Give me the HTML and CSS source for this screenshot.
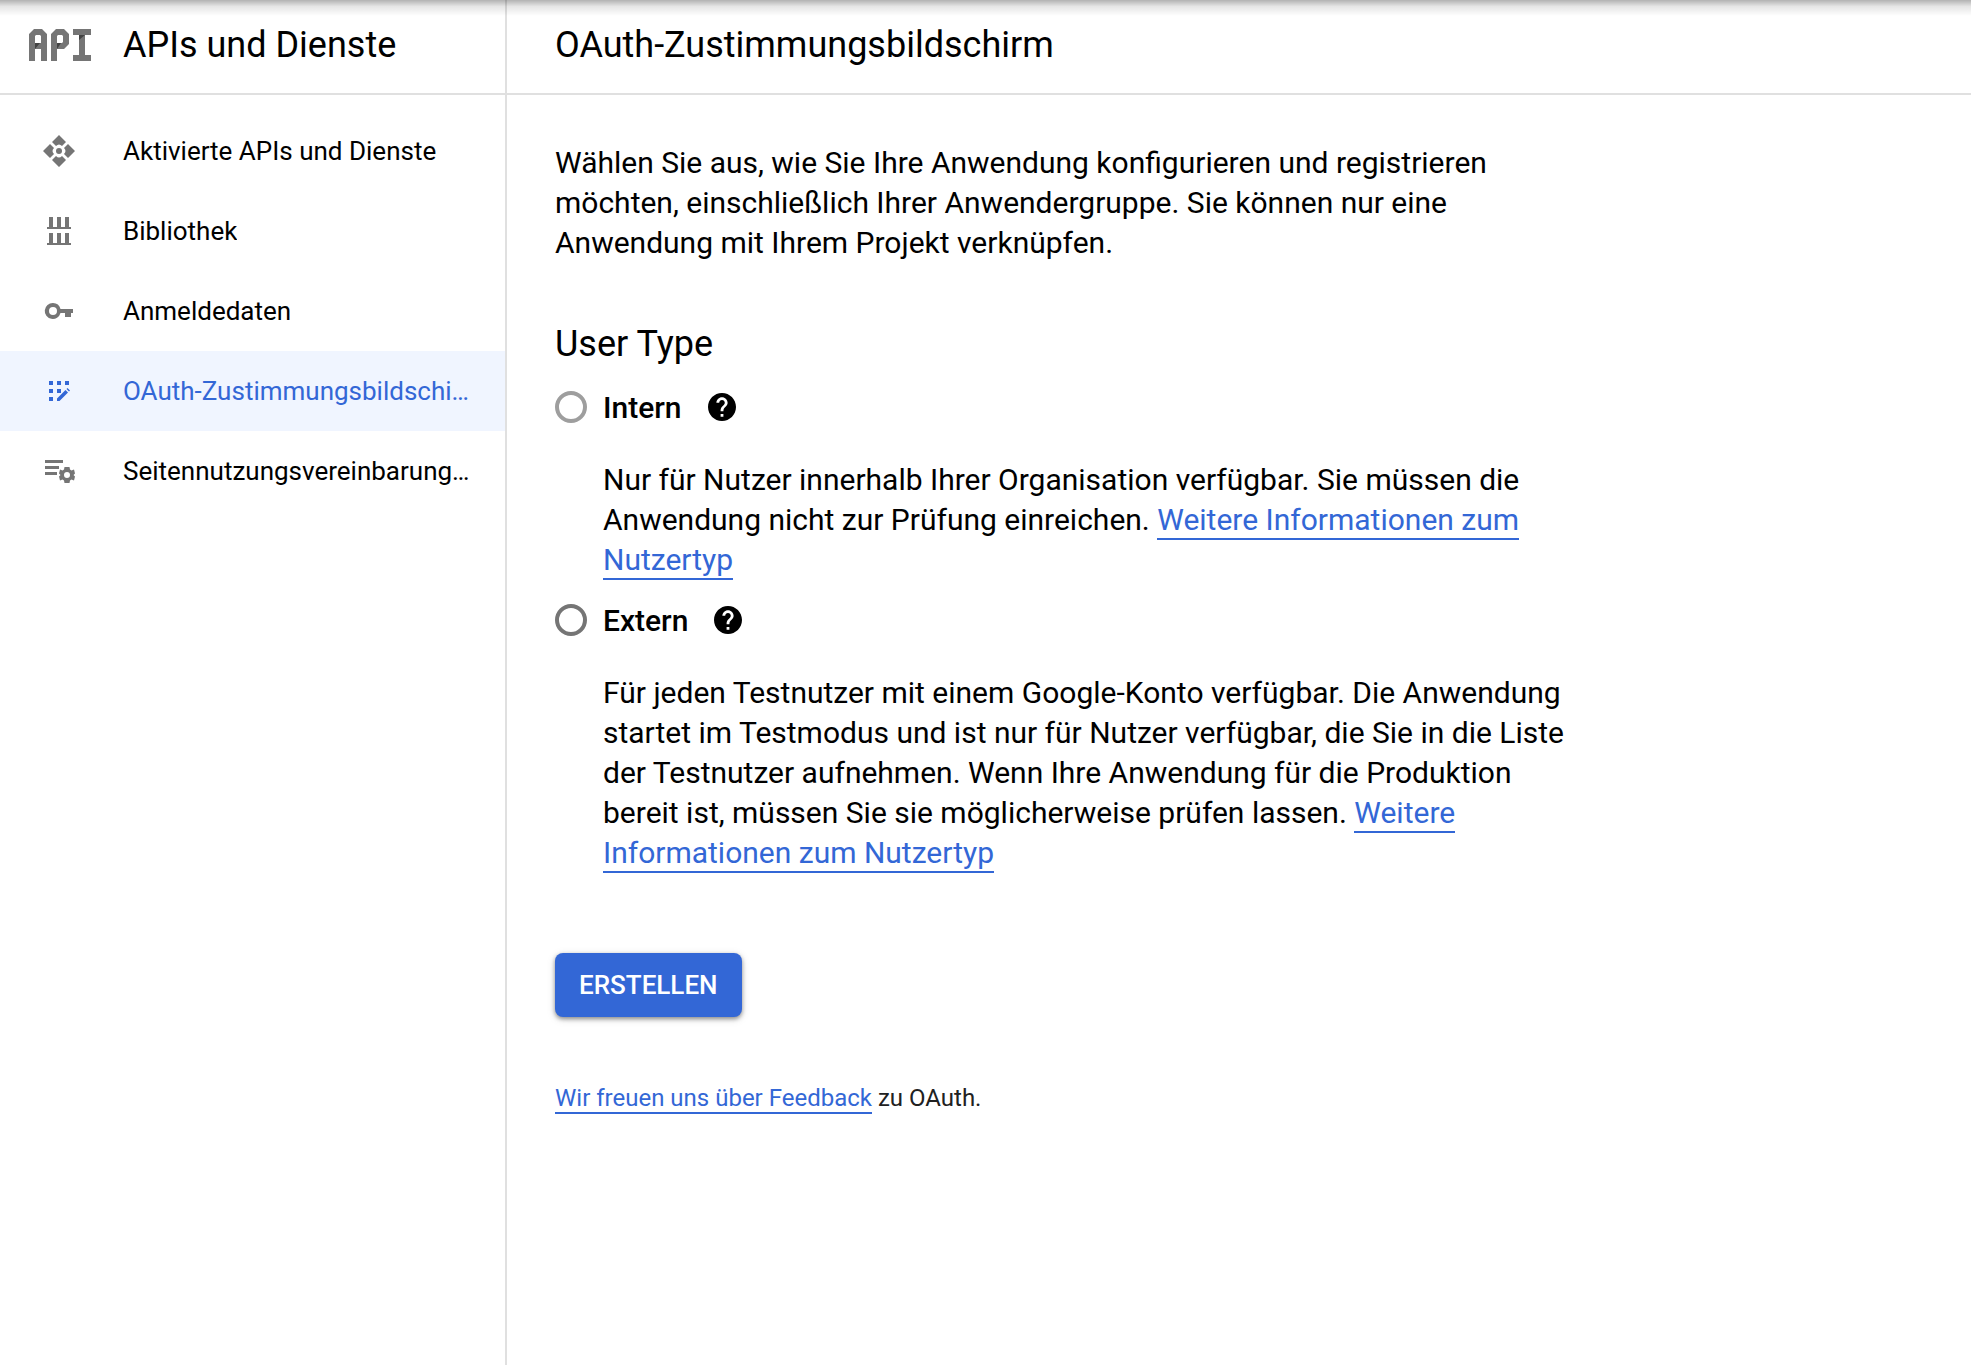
FILE: index.html
```html
<!DOCTYPE html>
<html lang="de">
<head>
<meta charset="utf-8">
<meta name="viewport" content="width=device-width, initial-scale=1">
<title>OAuth-Zustimmungsbildschirm</title>
<link rel="stylesheet" href="styles.css">
</head>
<body>
<div class="app">
  <aside class="sidebar">
    <div class="bar product">
      <svg class="product-logo" viewBox="0 0 62 32" aria-hidden="true">
        <g fill="#757575">
          <path d="M0 32V5l5-5h8l5 5v27h-6V20H6v12zM6 14h6V7l-1-1H7L6 7z" fill-rule="evenodd"/>
          <path d="M22 32V5l5-5h8l5 5v10l-5 5h-7v12zM28 14h5l1-1V7l-1-1h-4l-1 1z" fill-rule="evenodd"/>
          <path d="M44 0h18v6h-6v20h6v6H44v-6h6V6h-6z"/>
        </g>
        <path fill="#424242" d="M6 14h5l-5 6zM28 14h4l-4 6zM50 6h6l-6 5z"/>
      </svg>
      <span class="title">APIs und Dienste</span>
    </div>
    <nav class="nav">
      <a class="nav-item" href="#">
        <svg class="icon" viewBox="0 0 36 36" aria-hidden="true"><path d="M18 2l7 7-4 4q-3-3-6 0l-4-4zM34 18l-7 7-4-4q3-3 0-6l4-4zM18 34l-7-7 4-4q3 3 6 0l4 4zM2 18l7-7 4 4q-3 3 0 6l-4 4z"/><circle cx="18" cy="18" r="3"/></svg>
        <span class="nav-label">Aktivierte APIs und Dienste</span>
      </a>
      <a class="nav-item" href="#">
        <svg class="icon" viewBox="0 0 36 36" aria-hidden="true"><path d="M8 4h4v10h4V4h4v10h4V4h4v10h2v2H6v-2h2zM8 20h4v10h4V20h4v10h4V20h4v10h2v2H6v-2h2z"/></svg>
        <span class="nav-label">Bibliothek</span>
      </a>
      <a class="nav-item" href="#">
        <svg class="icon" viewBox="0 0 36 36" aria-hidden="true"><path fill-rule="evenodd" d="M12 10a8 8 0 0 1 7.500 6H32v4h-2v4h-6v-4h-4.500A8 8 0 1 1 12 10zM12 14a4 4 0 1 0 0 8 4 4 0 0 0 0-8z"/></svg>
        <span class="nav-label">Anmeldedaten</span>
      </a>
      <a class="nav-item active" href="#" aria-current="page">
        <svg class="icon" viewBox="0 0 36 36" aria-hidden="true"><path d="M8 8h4v4H8zM16 8h4v4h-4zM24 8h4v4h-4zM8 16h4v4H8zM16 16h4v4h-4zM8 24h4v4H8zM16 28v-2.500l8.500-8.500 2.500 2.500-8.500 8.500zM25.500 16l1-1 2.500 2.500-1 1z"/></svg>
        <span class="nav-label">OAuth-Zustimmungsbildschirm</span>
      </a>
      <a class="nav-item" href="#">
        <svg class="icon" viewBox="0 0 36 36" aria-hidden="true"><path d="M4 7h18v3H4zM4 13h14v3H4zM4 19h12v3H4z"/><g transform="translate(26 22)"><path fill-rule="evenodd" d="M-2.500-8h5l.5 2.500 1.500 1L7-5.500 8-1.500 6.500 0 8 1.500 7 5.500 4.500 4.500 3 5.500 2.500 8h-5L-3 5.500-4.500 4.500-7 5.500-8 1.500-6.500 0-8-1.500-7-5.500-4.500-4.500-3-5.500zM0-3a3 3 0 1 0 0 6 3 3 0 0 0 0-6z"/></g></svg>
        <span class="nav-label">Seitennutzungsvereinbarungen</span>
      </a>
    </nav>
  </aside>
  <main class="main">
    <header class="bar page-bar"><h1 class="title">OAuth-Zustimmungsbildschirm</h1></header>
    <form class="content">
      <p class="text">Wählen Sie aus, wie Sie Ihre Anwendung konfigurieren und registrieren möchten, einschließlich Ihrer Anwendergruppe. Sie können nur eine Anwendung mit Ihrem Projekt verknüpfen.</p>
      <h2 class="title section-title" id="user-type">User Type</h2>
      <div role="radiogroup" aria-labelledby="user-type">
        <div class="option">
          <input class="radio" type="radio" name="type" id="intern" disabled>
          <label class="option-label" for="intern">Intern</label>
          <button class="help" type="button" aria-label="Hilfe zu Intern"><svg viewBox="2 2 20 20" aria-hidden="true"><path d="M12 2C6.480 2 2 6.480 2 12s4.480 10 10 10 10-4.480 10-10S17.520 2 12 2zm1 17h-2v-2h2v2zm2.070-7.750l-.9.920C13.450 12.900 13 13.500 13 15h-2v-.5c0-1.100.45-2.100 1.170-2.830l1.240-1.260c.37-.36.59-.86.59-1.410 0-1.100-.9-2-2-2s-2 .9-2 2H8c0-2.210 1.790-4 4-4s4 1.790 4 4c0 .88-.36 1.680-.93 2.250z"/></svg></button>
        </div>
        <p class="text description">Nur für Nutzer innerhalb Ihrer Organisation verfügbar. Sie müssen die Anwendung nicht zur Prüfung einreichen. <a class="link" href="#">Weitere Informationen zum Nutzertyp</a></p>
        <div class="option">
          <input class="radio" type="radio" name="type" id="extern">
          <label class="option-label" for="extern">Extern</label>
          <button class="help" type="button" aria-label="Hilfe zu Extern"><svg viewBox="2 2 20 20" aria-hidden="true"><path d="M12 2C6.480 2 2 6.480 2 12s4.480 10 10 10 10-4.480 10-10S17.520 2 12 2zm1 17h-2v-2h2v2zm2.070-7.750l-.9.920C13.450 12.900 13 13.500 13 15h-2v-.5c0-1.100.45-2.100 1.170-2.830l1.240-1.260c.37-.36.59-.86.59-1.410 0-1.100-.9-2-2-2s-2 .9-2 2H8c0-2.210 1.790-4 4-4s4 1.790 4 4c0 .88-.36 1.680-.93 2.250z"/></svg></button>
        </div>
        <p class="text description">Für jeden Testnutzer mit einem Google-Konto verfügbar. Die Anwendung startet im Testmodus und ist nur für Nutzer verfügbar, die Sie in die Liste der Testnutzer aufnehmen. Wenn Ihre Anwendung für die Produktion bereit ist, müssen Sie sie möglicherweise prüfen lassen. <a class="link" href="#">Weitere Informationen zum Nutzertyp</a></p>
      </div>
      <button class="create" type="submit">ERSTELLEN</button>
      <p class="feedback"><a class="link" href="#">Wir freuen uns über Feedback</a> zu OAuth.</p>
    </form>
  </main>
</div>
</body>
</html>
```
FILE: styles.css
```css
* { box-sizing: border-box; }

body {
  margin: 0;
  background: #fff;
  color: #000;
  font-family: Roboto, sans-serif;
  font-size: 26px;
}

h1, h2, p { margin: 0; }

.app {
  display: flex;
  min-height: 100vh;
}

/* Shadow cast by the toolbar above the page */
.app::before {
  content: "";
  position: absolute;
  inset: 0 0 auto;
  height: 16px;
  background: linear-gradient(rgba(0, 0, 0, .3), rgba(0, 0, 0, .1) 40%, rgba(0, 0, 0, 0));
  pointer-events: none;
}

.sidebar {
  flex: 0 0 507px;
  min-width: 0;
  border-right: 2px solid #e0e0e0;
}

.main {
  flex: 1;
  min-width: 0;
}

.bar {
  display: flex;
  align-items: center;
  height: 95px;
  padding-bottom: 3px;
  border-bottom: 2px solid #e0e0e0;
}

.product {
  gap: 32px;
  padding-left: 29px;
}

.product-logo {
  width: 62px;
  height: 32px;
}

.page-bar { padding-left: 48px; }

.title {
  font-size: 36px;
  font-weight: 400;
  line-height: 48px;
}

.nav { padding-top: 16px; }

.nav-item {
  display: flex;
  align-items: center;
  gap: 46px;
  height: 80px;
  padding: 0 32px 0 41px;
  color: #000;
  text-decoration: none;
}

.nav-item.active {
  background: #f0f5ff;
  color: #3367d6;
}

.icon {
  flex: none;
  width: 36px;
  height: 36px;
  fill: #757575;
}

.active .icon { fill: #3367d6; }

.nav-label {
  overflow: hidden;
  text-overflow: ellipsis;
  white-space: nowrap;
}

.content {
  max-width: 1116px;
  padding: 48px;
}

.text {
  font-size: 30px;
  line-height: 40px;
}

.section-title { margin: 57px 0 7px; }

.option {
  display: flex;
  align-items: center;
  height: 64px;
}

.radio {
  appearance: none;
  width: 32px;
  height: 32px;
  margin: 0 16px 0 0;
  border: 4px solid #757575;
  border-radius: 50%;
}

.radio:checked { box-shadow: inset 0 0 0 4px #fff; background: #3367d6; }

.radio:disabled { border-color: #9e9e9e; }

.option-label {
  font-size: 30px;
  font-weight: 500;
}

.help {
  display: flex;
  margin-left: 26px;
  padding: 0;
  border: 0;
  background: none;
}

.help svg {
  width: 28px;
  height: 28px;
}

.description {
  padding: 21px 0 8px 48px;
}

.link {
  border-bottom: 2px solid #3367d6;
  color: #3367d6;
  text-decoration: none;
}

.description .link { padding-bottom: 1px; }

.create {
  display: block;
  height: 64px;
  margin-top: 72px;
  padding: 0 24px;
  border: 0;
  border-radius: 8px;
  background: #3367d6;
  box-shadow: 0 2px 4px rgba(0, 0, 0, .4), 0 2px 10px rgba(0, 0, 0, .12);
  color: #fff;
  font: 500 26px/64px Roboto, sans-serif;
}

.feedback {
  margin-top: 65px;
  color: #212121;
  font-size: 24px;
  line-height: 32px;
}
```
